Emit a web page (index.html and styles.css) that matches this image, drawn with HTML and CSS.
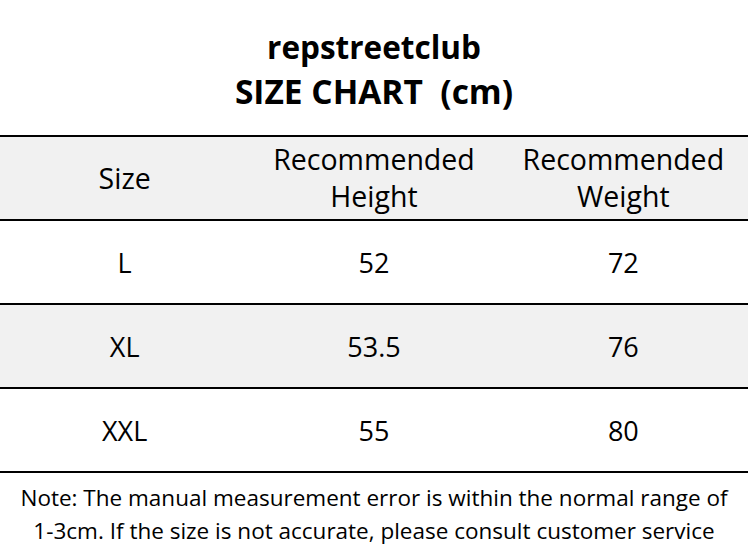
FILE: index.html
```html
<!DOCTYPE html>
<html>
<head>
<meta charset="utf-8">
<link rel="stylesheet" href="styles.css">
</head>
<body>
<div class="page">
  <header class="title">
    <div class="brand">repstreetclub</div>
    <div class="chart">SIZE CHART&nbsp; (cm)</div>
  </header>
  <div class="table">
    <div class="row head">
      <div class="cell">Size</div>
      <div class="cell">Recommended<br>Height</div>
      <div class="cell">Recommended<br>Weight</div>
    </div>
    <div class="row">
      <div class="cell">L</div>
      <div class="cell">52</div>
      <div class="cell">72</div>
    </div>
    <div class="row alt">
      <div class="cell">XL</div>
      <div class="cell">53.5</div>
      <div class="cell">76</div>
    </div>
    <div class="row">
      <div class="cell">XXL</div>
      <div class="cell">55</div>
      <div class="cell">80</div>
    </div>
  </div>
  <p class="note">Note: The manual measurement error is within the normal range of<br>1-3cm. If the size is not accurate, please consult customer service</p>
</div>
</body>
</html>
```

FILE: styles.css
```css
html, body {
  margin: 0;
  padding: 0;
  background: #fff;
}
body {
  font-family: "Open Sans", "Noto Sans", sans-serif;
  color: #000;
}
.page {
  width: 748px;
  height: 557px;
  overflow: hidden;
}
.title {
  height: 135px;
  box-sizing: border-box;
  padding-top: 24px;
  text-align: center;
  font-weight: 700;
  font-size: 31.5px;
  line-height: 45px;
}
.chart {
  font-size: 33.5px;
}
.table {
  border-top: 2px solid #000;
}
.row {
  display: grid;
  grid-template-columns: 1fr 1fr 1fr;
  height: 82px;
  border-bottom: 2px solid #000;
  font-size: 27px;
  line-height: 37px;
}
.row.head {
  font-size: 28.5px;
}
.row.head, .row.alt {
  background: #f1f1f1;
}
.cell {
  display: flex;
  align-items: center;
  justify-content: center;
  text-align: center;
}
.note {
  margin: 0;
  padding-top: 8px;
  text-align: center;
  font-size: 22.5px;
  line-height: 33px;
}
```
